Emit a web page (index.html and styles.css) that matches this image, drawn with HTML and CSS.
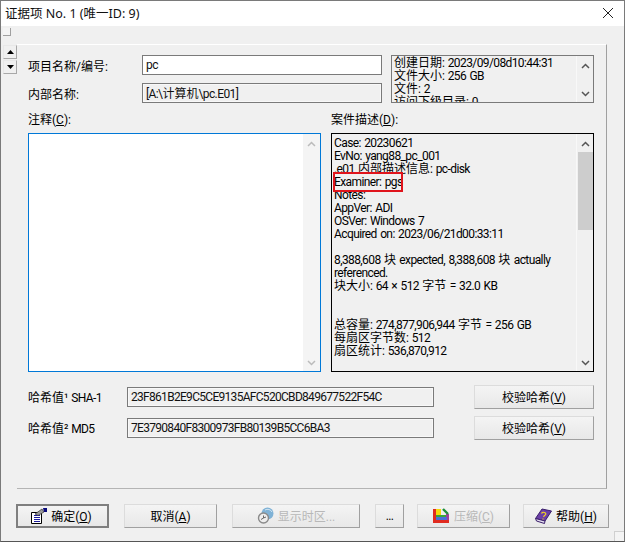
FILE: index.html
```html
<!DOCTYPE html>
<html lang="zh-CN">
<head>
    <meta charset="UTF-8">
    <meta name="viewport" content="width=device-width, initial-scale=1.0">
    <title>证据项 No. 1</title>
    <link rel="stylesheet" href="styles.css">
</head>
<body>
<div class="window">
    <div class="titlebar">
        <span class="title">证据项 No. 1 (唯一ID: 9)</span>
        <svg class="close" width="12" height="12" viewBox="0 0 12 12"><path d="M1 1 L11 11 M11 1 L1 11" stroke="#222" stroke-width="1" fill="none"/></svg>
    </div>
    <div class="tabstrip"><span class="tab"></span></div>

    <div class="main">
        <div class="spinner">
            <span class="spin-btn"><svg width="7" height="4" viewBox="0 0 7 4"><path d="M3.5 0 L7 4 L0 4 Z" fill="#000"/></svg></span>
            <span class="spin-btn"><svg width="7" height="4" viewBox="0 0 7 4"><path d="M0 0 L7 0 L3.5 4 Z" fill="#000"/></svg></span>
        </div>

        <div class="panel">
            <div class="top-row">
                <div class="names">
                    <label class="name-label zh">项目名称/编号:</label>
                    <div class="field field-white">pc</div>
                    <label class="name-label zh">内部名称:</label>
                    <div class="field"><span>[A:\<span class="zh">计算机</span>\pc.E01]</span></div>
                </div>
                <div class="info-box">
                    <div class="info-text">
                        <span class="zh">创建日期</span>: 2023/09/08d10:44:31<br>
                        <span class="zh">文件大小</span>: 256 GB<br>
                        <span class="zh">文件</span>: 2<br>
                        <span class="zh">访问下级目录</span>: 0
                    </div>
                    <div class="scrollbar">
                        <svg width="9" height="6" viewBox="0 0 9 6"><path d="M1 5 L4.5 1.5 L8 5" stroke="#555" stroke-width="1.5" fill="none"/></svg>
                        <svg width="9" height="6" viewBox="0 0 9 6"><path d="M1 1 L4.5 4.5 L8 1" stroke="#555" stroke-width="1.5" fill="none"/></svg>
                    </div>
                </div>
            </div>

            <div class="mid-row">
                <div class="mid-col">
                    <label class="box-label zh">注释(<u>C</u>):</label>
                    <div class="comment-box">
                        <div class="scrollbar scrollbar-off">
                            <svg width="9" height="6" viewBox="0 0 9 6"><path d="M1 5 L4.5 1.5 L8 5" stroke="#bbb" stroke-width="1.5" fill="none"/></svg>
                            <svg width="9" height="6" viewBox="0 0 9 6"><path d="M1 1 L4.5 4.5 L8 1" stroke="#bbb" stroke-width="1.5" fill="none"/></svg>
                        </div>
                    </div>
                </div>
                <div class="mid-col">
                    <label class="box-label zh">案件描述(<u>D</u>):</label>
                    <div class="desc-box">
                        <div class="desc-text">
                            Case: 20230621<br>
                            EvNo: yang88_pc_001<br>
                            .e01 <span class="zh">内部描述信息</span>: pc-disk<br>
                            Examiner: pgs<br>
                            Notes:<br>
                            AppVer: ADI<br>
                            OSVer: Windows 7<br>
                            Acquired on: 2023/06/21d00:33:11<br>
                            <br>
                            8,388,608 <span class="zh">块</span> expected, 8,388,608 <span class="zh">块</span> actually referenced.<br>
                            <span class="zh">块大小</span>: 64 × 512 <span class="zh">字节</span> = 32.0 KB<br>
                            <br>
                            <br>
                            <span class="zh">总容量</span>: 274,877,906,944 <span class="zh">字节</span> = 256 GB<br>
                            <span class="zh">每扇区字节数</span>: 512<br>
                            <span class="zh">扇区统计</span>: 536,870,912
                        </div>
                        <div class="scrollbar">
                            <svg width="9" height="6" viewBox="0 0 9 6"><path d="M1 5 L4.5 1.5 L8 5" stroke="#555" stroke-width="1.5" fill="none"/></svg>
                            <span class="thumb"></span>
                            <svg width="9" height="6" viewBox="0 0 9 6"><path d="M1 1 L4.5 4.5 L8 1" stroke="#555" stroke-width="1.5" fill="none"/></svg>
                        </div>
                        <span class="highlight"></span>
                    </div>
                </div>
            </div>

            <div class="hash-row">
                <label class="hash-label"><span class="zh">哈希值</span>¹ SHA-1</label>
                <div class="field hash-field">23F861B2E9C5CE9135AFC520CBD849677522F54C</div>
                <button class="btn verify-btn"><span class="zh">校验哈希(<u>V</u>)</span></button>
            </div>
            <div class="hash-row">
                <label class="hash-label"><span class="zh">哈希值</span>² MD5</label>
                <div class="field hash-field">7E3790840F8300973FB80139B5CC6BA3</div>
                <button class="btn verify-btn"><span class="zh">校验哈希(<u>V</u>)</span></button>
            </div>
        </div>
    </div>

    <div class="footer">
        <button class="btn btn-default w-93">
            <svg width="17" height="16" viewBox="0 0 17 16">
                <path d="M1.5 4.5 H11.5 V15.5 H1.5 Z" fill="#fff" stroke="#000"/>
                <path d="M4 7.5 H10 M4 9.5 H10 M4 11.5 H10 M4 13.5 H10" stroke="#1a1a9c"/>
                <path d="M5 6 L12 1 L14 4 L8 7.5 Z" fill="#9a9a9a" stroke="#333" stroke-width=".7"/>
                <path d="M13 0 H17 V4 H14 Z" fill="#0a0a7a"/>
            </svg>
            <span class="zh">确定(<u>O</u>)</span>
        </button>
        <button class="btn w-93"><span class="zh">取消(<u>A</u>)</span></button>
        <button class="btn btn-off w-128">
            <svg width="17" height="17" viewBox="0 0 17 17">
                <circle cx="10.5" cy="6.5" r="6" fill="#7fb2d6"/>
                <path d="M8 3 A5 5 0 0 1 15 5" stroke="#d4e6f2" fill="none"/>
                <circle cx="6.5" cy="11" r="5" fill="#eeeeee" stroke="#8a8a8a" stroke-width="1.4"/>
                <path d="M6.5 8.5 V11 L4 12.5 M6.5 11 L9 10" stroke="#666" fill="none"/>
            </svg>
            <span class="zh">显示时区...</span>
        </button>
        <button class="btn w-29">...</button>
        <button class="btn btn-off w-93 mini-gap">
            <svg width="17" height="16" viewBox="0 0 17 16">
                <path d="M0 1 H3 V12 H16 V15 H0 Z" fill="#e02b20"/>
                <path d="M3 1 H8 V7 H3 Z" fill="#f5d90a"/>
                <path d="M3 7 H13 V9 H3 Z" fill="#3aa63a"/>
                <path d="M3 9 H14 V12 H3 Z" fill="#4a6fd8"/>
                <path d="M13 6 H16 V12 H14 V9 H13 Z" fill="#a0409a"/>
                <path d="M10 1 L15 6" stroke="#1f8f3a" stroke-width="2.4"/>
            </svg>
            <span class="zh">压缩(<u>C</u>)</span>
        </button>
        <button class="btn w-86 mini-gap">
            <svg width="17" height="16" viewBox="0 0 17 16">
                <path d="M0.5 10.5 L7 1 L16.5 3 L10 13 Z" fill="#6a3ea6" stroke="#3b1f6b"/>
                <path d="M0.5 10.5 L10 13 L9.5 15.5 L1.5 13 Z" fill="#e4deef" stroke="#3b1f6b"/>
                <path d="M6.5 5.5 A2.2 1.7 0 1 1 9.5 7.5 L8.5 9 M8 10.5 V11.5" stroke="#f2d21f" stroke-width="1.2" fill="none"/>
            </svg>
            <span class="zh">帮助(<u>H</u>)</span>
        </button>
    </div>
    <span class="grip"></span>
</div>
</body>
</html>
```

FILE: styles.css
```css
* {
    box-sizing: border-box;
}
html, body {
    margin: 0;
    padding: 0;
}
body {
    font-family: Roboto, "Noto Sans CJK SC", sans-serif;
    font-size: 12px;
    letter-spacing: -0.6px;
    word-spacing: 1px;
    color: #000;
    background-color: #f0f0f0;
}
/* Chinese runs keep their full width, only the latin text is squeezed */
.zh {
    letter-spacing: 0;
    word-spacing: 0;
}
.window {
    position: relative;
    width: 625px;
    height: 542px;
    overflow: hidden;
    background-color: #f0f0f0;
    border-top: 1px solid #7a7a7a;
    border-left: 1px solid #7a7a7a;
    border-right: 1px solid #7a7a7a;
    border-bottom: 1px solid #555;
}
.titlebar {
    display: flex;
    justify-content: space-between;
    align-items: center;
    height: 25px;
    padding: 0 10px 2px 4px;
    background-color: #fff;
}
.title {
    font-family: "Noto Sans", "Noto Sans CJK SC", sans-serif;
    font-size: 12.5px;
    letter-spacing: 0;
    word-spacing: 0;
    color: #111;
}
.tabstrip {
    height: 18px;
    padding: 2px 0 0 2px;
}
.tab {
    display: block;
    width: 8px;
    height: 8px;
    background-color: #f4f4f4;
    border-right: 1px solid #a0a0a0;
    border-bottom: 1px solid #a0a0a0;
}
.main {
    display: flex;
    height: 445px;
}
.spinner {
    display: flex;
    flex-direction: column;
    gap: 1px;
    width: 16px;
    padding: 1px 0 0 2px;
}
.spin-btn {
    display: flex;
    align-items: center;
    justify-content: center;
    width: 14px;
    height: 14px;
    background-color: #f0f0f0;
    border: 1px solid #a8a8a8;
    border-top-color: #e8e8e8;
    border-left-color: #e8e8e8;
}
.panel {
    width: 590px;
    padding: 10px 12px 0 11px;
    border-top: 1px solid #fff;
    border-right: 1px solid #a0a0a0;
    border-bottom: 1px solid #b4b4b4;
}
.top-row {
    display: flex;
    gap: 9px;
}
.names {
    display: grid;
    grid-template-columns: 114px 240px;
    grid-auto-rows: 20px;
    row-gap: 8px;
    align-items: center;
}
.field {
    display: flex;
    align-items: center;
    height: 20px;
    padding: 0 3px 1px;
    border: 1px solid #7a7a7a;
    box-shadow: inset 0 0 0 1px #f8f8f8;
    color: #111;
    white-space: nowrap;
    overflow: hidden;
}
.field-white {
    background-color: #fff;
    box-shadow: none;
}
.info-box {
    display: flex;
    width: 203px;
    height: 48px;
    border: 1px solid #7a7a7a;
    overflow: hidden;
}
.info-text {
    flex: 1;
    padding: 1px 0 0 2px;
    line-height: 13px;
    white-space: nowrap;
}
.scrollbar {
    display: flex;
    flex-direction: column;
    align-items: center;
    justify-content: space-between;
    flex: none;
    width: 17px;
    padding: 7px 0 5px;
    background-color: #f0f0f0;
    border-left: 1px solid #f8f8f8;
}
.mid-row {
    display: flex;
    gap: 10px;
    margin-top: 11px;
}
.mid-col:first-child {
    width: 293px;
}
.mid-col:last-child {
    width: 263px;
}
.box-label {
    display: block;
    height: 19px;
    line-height: 13px;
}
.comment-box {
    display: flex;
    justify-content: flex-end;
    height: 239px;
    background-color: #fff;
    border: 1px solid #0078d7;
}
.scrollbar-off {
    background-color: #f4f4f4;
    border-left: none;
}
.desc-box {
    position: relative;
    display: flex;
    height: 239px;
    border: 1px solid #000;
}
.desc-text {
    flex: 1;
    padding: 3px 0 0 2px;
    line-height: 13px;
}
.thumb {
    width: 15px;
    height: 78px;
    margin-top: 5px;
    margin-bottom: auto;
    background-color: #cdcdcd;
}
.highlight {
    position: absolute;
    left: 1px;
    top: 38px;
    width: 70px;
    height: 20px;
    border: 2px solid #e0141c;
}
.hash-row {
    display: flex;
    align-items: center;
    height: 24px;
    margin-top: 7px;
}
.mid-row + .hash-row {
    margin-top: 13px;
}
.hash-label {
    width: 99px;
    padding-bottom: 1px;
}
.hash-field {
    width: 307px;
    margin-right: 40px;
    padding-left: 3px;
    letter-spacing: -0.7px;
}
.btn {
    display: flex;
    align-items: center;
    justify-content: center;
    gap: 4px;
    height: 24px;
    padding: 0 0 1px;
    font: inherit;
    letter-spacing: inherit;
    color: #000;
    background: linear-gradient(#f4f4f4, #e8e8e8);
    border: 1px solid #dcdcdc;
    border-right-color: #a0a0a0;
    border-bottom-color: #a0a0a0;
    white-space: nowrap;
}
.verify-btn {
    width: 120px;
}
.btn-default {
    padding-right: 3px;
    border: 2px solid #7f7f7f;
}
.btn-off {
    color: #b8b8b8;
}
.footer {
    display: flex;
    gap: 15px;
    padding: 15px 0 0 15px;
}
.mini-gap {
    margin-left: -2px;
}
.w-93 {
    width: 93px;
}
.w-128 {
    width: 128px;
}
.w-29 {
    width: 29px;
}
.w-86 {
    width: 86px;
}
.grip {
    position: absolute;
    right: 0;
    bottom: 0;
    width: 10px;
    height: 10px;
    background-color: #f4f4f4;
    border-top: 1px solid #d0d0d0;
    border-left: 1px solid #d0d0d0;
}
```
